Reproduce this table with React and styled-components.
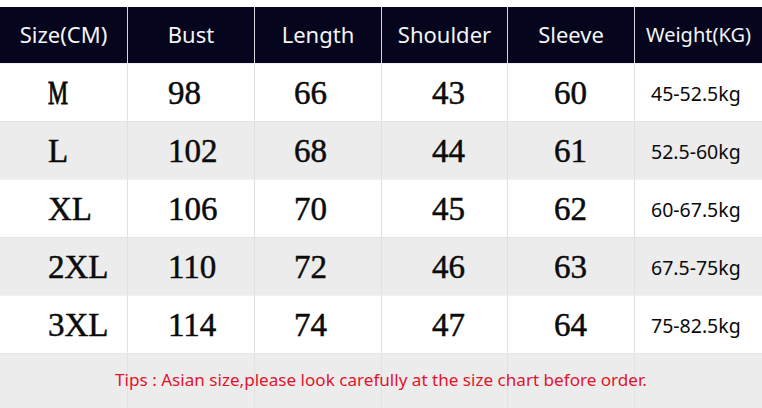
import React from "react";
import styled, { createGlobalStyle } from "styled-components";

const Global = createGlobalStyle`
  html, body { margin: 0; padding: 0; background: #ffffff; }
  body { width: 762px; height: 408px; overflow: hidden; }
`;

const Page = styled.div`
  padding-top: 7px;
  width: 762px;
  box-sizing: border-box;
`;

const Table = styled.div`
  display: grid;
  grid-template-columns: 127px 127px 127px 126px 127px 128px;
  grid-template-rows: 56px repeat(5, 58px) 55px;
`;

const HeadCell = styled.div`
  background: #05051d;
  color: #f4f4f6;
  font-family: "Noto Sans", "Open Sans", sans-serif;
  font-size: ${(p) => p.$size || 22}px;
  display: flex;
  align-items: center;
  justify-content: center;
  border-left: ${(p) => (p.$first ? "none" : "1px solid #d8d8de")};
  box-sizing: border-box;
  padding-bottom: 2px;
`;

const Cell = styled.div`
  background: ${(p) => (p.$alt ? "#ececec" : "#ffffff")};
  border-left: ${(p) => (p.$first ? "none" : "1px solid #e0e0e0")};
  border-top: 1px solid ${(p) => (p.$alt ? "#e4e4e4" : "#f1f1f1")};
  box-sizing: border-box;
  display: flex;
  align-items: center;
  padding-left: ${(p) => p.$pad}px;
  padding-top: 2px;
  color: #0b0b0b;
  font-family: ${(p) =>
    p.$sans
      ? `"Noto Sans", "Open Sans", sans-serif`
      : `"Liberation Serif", "Times New Roman", serif`};
  font-size: ${(p) => (p.$sans ? 19.5 : 33)}px;
  -webkit-text-stroke: ${(p) => (p.$sans ? "0" : "0.5px #0b0b0b")};
  white-space: nowrap;
`;

const Narrow = styled.span`
  display: inline-block;
  transform: scaleX(0.68);
  transform-origin: left center;
  -webkit-text-stroke: 1px #0b0b0b;
`;

const TipCell = styled.div`
  grid-row: 7;
  background: #ececec;
  border-left: ${(p) => (p.$first ? "none" : "1px solid #e3e3e3")};
  border-top: 1px solid #e6e6e6;
  box-sizing: border-box;
`;

const Tip = styled.div`
  grid-row: 7;
  grid-column: 1 / -1;
  display: flex;
  align-items: center;
  justify-content: center;
  color: #e3132c;
  font-family: "Noto Sans", "Open Sans", sans-serif;
  font-size: 17.1px;
  padding-bottom: 2px;
  z-index: 1;
`;

const headers = [
  { t: "Size(CM)" },
  { t: "Bust" },
  { t: "Length" },
  { t: "Shoulder" },
  { t: "Sleeve" },
  { t: "Weight(KG)", size: 20 },
];

const rows = [
  ["M", "98", "66", "43", "60", "45-52.5kg"],
  ["L", "102", "68", "44", "61", "52.5-60kg"],
  ["XL", "106", "70", "45", "62", "60-67.5kg"],
  ["2XL", "110", "72", "46", "63", "67.5-75kg"],
  ["3XL", "114", "74", "47", "64", "75-82.5kg"],
];

const pads = [48, 40, 39, 50, 46, 16];

export default function App() {
  return (
    <Page>
      <Global />
      <Table>
        {headers.map((h, i) => (
          <HeadCell key={h.t} $first={i === 0} $size={h.size}>
            {h.t}
          </HeadCell>
        ))}
        {rows.map((r, ri) =>
          r.map((v, ci) => (
            <Cell
              key={`${ri}-${ci}`}
              $alt={ri % 2 === 1}
              $first={ci === 0}
              $pad={pads[ci]}
              $sans={ci === 5}
            >
              {v === "M" ? <Narrow>M</Narrow> : v}
            </Cell>
          ))
        )}
        {pads.map((_, i) => (
          <TipCell key={`tip-${i}`} $first={i === 0} style={{ gridColumn: i + 1 }} />
        ))}
        <Tip>Tips : Asian size,please look carefully at the size chart before order.</Tip>
      </Table>
    </Page>
  );
}
